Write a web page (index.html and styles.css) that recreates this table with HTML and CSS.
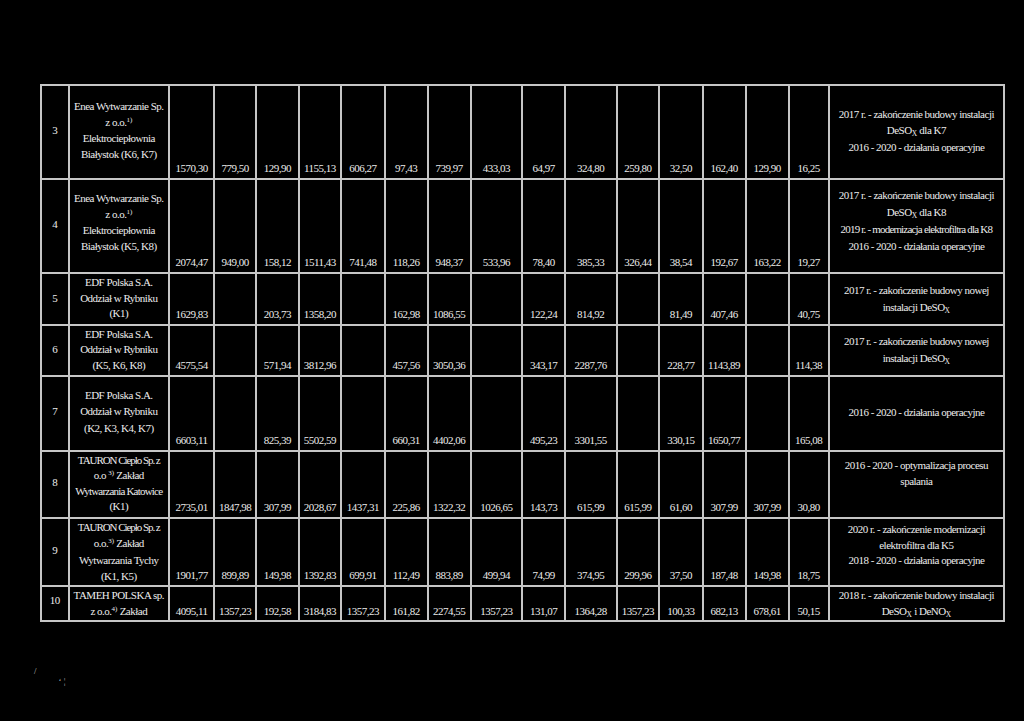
FILE: index.html
```html
<!DOCTYPE html>
<html lang="pl">
<head>
<meta charset="utf-8">
<title>Tabela</title>
<link rel="stylesheet" href="styles.css">
</head>
<body>
<div class="page">
<table class="grid">
<colgroup>
<col class="w0"><col class="w1"><col class="w2"><col class="w3"><col class="w4"><col class="w5"><col class="w6"><col class="w7"><col class="w8"><col class="w9"><col class="w10"><col class="w11"><col class="w12"><col class="w13"><col class="w14"><col class="w15"><col class="w16"><col class="w17">
</colgroup>
<tbody>
<tr class="r3">
<td class="idx">3</td>
<td class="name">Enea Wytwarzanie Sp.<br>z o.o.<span class="fn">1)</span><br>Elektrociepłownia<br>Białystok (K6, K7)</td>
<td>1570,30</td><td>779,50</td><td>129,90</td><td>1155,13</td><td>606,27</td><td>97,43</td><td>739,97</td><td>433,03</td><td>64,97</td><td>324,80</td><td>259,80</td><td>32,50</td><td>162,40</td><td>129,90</td><td>16,25</td>
<td class="note">2017 r. - zakończenie budowy instalacji<br>DeSO<span class="sub">X</span> dla K7<br>2016 - 2020 - działania operacyjne</td>
</tr>
<tr class="r4">
<td class="idx">4</td>
<td class="name">Enea Wytwarzanie Sp.<br>z o.o.<span class="fn">1)</span><br>Elektrociepłownia<br>Białystok (K5, K8)</td>
<td>2074,47</td><td>949,00</td><td>158,12</td><td>1511,43</td><td>741,48</td><td>118,26</td><td>948,37</td><td>533,96</td><td>78,40</td><td>385,33</td><td>326,44</td><td>38,54</td><td>192,67</td><td>163,22</td><td>19,27</td>
<td class="note">2017 r. - zakończenie budowy instalacji<br>DeSO<span class="sub">X</span> dla K8<br><span class="tight">2019 r. - modernizacja elektrofiltra dla K8</span><br>2016 - 2020 - działania operacyjne</td>
</tr>
<tr class="r5">
<td class="idx">5</td>
<td class="name">EDF Polska S.A.<br>Oddział w Rybniku<br>(K1)</td>
<td>1629,83</td><td></td><td>203,73</td><td>1358,20</td><td></td><td>162,98</td><td>1086,55</td><td></td><td>122,24</td><td>814,92</td><td></td><td>81,49</td><td>407,46</td><td></td><td>40,75</td>
<td class="note">2017 r. - zakończenie budowy nowej<br>instalacji DeSO<span class="sub">X</span></td>
</tr>
<tr class="r6">
<td class="idx">6</td>
<td class="name">EDF Polska S.A.<br>Oddział w Rybniku<br>(K5, K6, K8)</td>
<td>4575,54</td><td></td><td>571,94</td><td>3812,96</td><td></td><td>457,56</td><td>3050,36</td><td></td><td>343,17</td><td>2287,76</td><td></td><td>228,77</td><td>1143,89</td><td></td><td>114,38</td>
<td class="note">2017 r. - zakończenie budowy nowej<br>instalacji DeSO<span class="sub">X</span></td>
</tr>
<tr class="r7">
<td class="idx">7</td>
<td class="name">EDF Polska S.A.<br>Oddział w Rybniku<br>(K2, K3, K4, K7)</td>
<td>6603,11</td><td></td><td>825,39</td><td>5502,59</td><td></td><td>660,31</td><td>4402,06</td><td></td><td>495,23</td><td>3301,55</td><td></td><td>330,15</td><td>1650,77</td><td></td><td>165,08</td>
<td class="note">2016 - 2020 - działania operacyjne</td>
</tr>
<tr class="r8">
<td class="idx">8</td>
<td class="name"><span class="tighter">TAURON Ciepło Sp. z</span><br>o.o <span class="fn">3)</span> Zakład<br><span class="tight">Wytwarzania Katowice</span><br>(K1)</td>
<td>2735,01</td><td>1847,98</td><td>307,99</td><td>2028,67</td><td>1437,31</td><td>225,86</td><td>1322,32</td><td>1026,65</td><td>143,73</td><td>615,99</td><td>615,99</td><td>61,60</td><td>307,99</td><td>307,99</td><td>30,80</td>
<td class="note">2016 - 2020 - optymalizacja procesu<br>spalania</td>
</tr>
<tr class="r9">
<td class="idx">9</td>
<td class="name"><span class="tighter">TAURON Ciepło Sp. z</span><br>o.o.<span class="fn">3)</span> Zakład<br>Wytwarzania Tychy<br>(K1, K5)</td>
<td>1901,77</td><td>899,89</td><td>149,98</td><td>1392,83</td><td>699,91</td><td>112,49</td><td>883,89</td><td>499,94</td><td>74,99</td><td>374,95</td><td>299,96</td><td>37,50</td><td>187,48</td><td>149,98</td><td>18,75</td>
<td class="note">2020 r. - zakończenie modernizacji<br>elektrofiltra dla K5<br>2018 - 2020 - działania operacyjne</td>
</tr>
<tr class="r10">
<td class="idx">10</td>
<td class="name">TAMEH POLSKA sp.<br>z o.o.<span class="fn">4)</span> Zakład</td>
<td>4095,11</td><td>1357,23</td><td>192,58</td><td>3184,83</td><td>1357,23</td><td>161,82</td><td>2274,55</td><td>1357,23</td><td>131,07</td><td>1364,28</td><td>1357,23</td><td>100,33</td><td>682,13</td><td>678,61</td><td>50,15</td>
<td class="note">2018 r. - zakończenie budowy instalacji<br>DeSO<span class="sub">X</span> i DeNO<span class="sub">X</span></td>
</tr>
</tbody>
</table>
<div class="specks"><span class="s1">/</span><span class="s2">ʻ ¦</span></div>
</div>
</body>
</html>
```

FILE: styles.css
```css
html, body {
  margin: 0;
  padding: 0;
  background: #000;
}

.page {
  width: 1024px;
  height: 721px;
  overflow: hidden;
  padding: 84px 0 0 40px;
  box-sizing: border-box;
  font-family: "Liberation Serif", "Times New Roman", serif;
  color: #ececec;
}

.grid {
  border-collapse: collapse;
  table-layout: fixed;
  width: 963px;
  font-size: 11px;
  letter-spacing: -0.5px;
  line-height: 16px;
}

.w0 { width: 27.6px; }
.w1 { width: 100.4px; }
.w2 { width: 45.3px; }
.w3 { width: 41.7px; }
.w4 { width: 42.6px; }
.w5 { width: 42.7px; }
.w6 { width: 43.3px; }
.w7 { width: 43px; }
.w8 { width: 43px; }
.w9 { width: 51.7px; }
.w10 { width: 42.7px; }
.w11 { width: 51.6px; }
.w12 { width: 42.7px; }
.w13 { width: 43.3px; }
.w14 { width: 43px; }
.w15 { width: 43px; }
.w16 { width: 40.4px; }
.w17 { width: 175px; }

.grid td {
  box-sizing: border-box;
  border: 2px solid #c6c6c6;
  padding: 0 0 2px 0;
  text-align: center;
  vertical-align: bottom;
  white-space: nowrap;
  overflow: visible;
}

.grid td.idx,
.grid td.name,
.grid td.note {
  vertical-align: middle;
  padding-bottom: 5px;
}

.grid tr.r3 td { height: 94px; }
.grid tr.r4 td { height: 94px; }
.grid tr.r5 td { height: 52px; }
.grid tr.r6 td { height: 51px; }
.grid tr.r7 td { height: 75px; }
.grid tr.r8 td { height: 67px; }
.grid tr.r9 td { height: 68px; }
.grid tr.r10 td { height: 35px; }

.grid tr.r3 td.note { line-height: 16.5px; padding-bottom: 3px; }
.grid tr.r4 td.note { line-height: 16.8px; padding-bottom: 10px; }
.grid tr.r4 td.name { padding-bottom: 8px; }

.grid tr.r5 td.name, .grid tr.r6 td.name { line-height: 15.5px; padding-bottom: 1px; }
.grid tr.r5 td.note, .grid tr.r6 td.note { line-height: 17px; padding-bottom: 1px; }
.grid tr.r5 td.idx, .grid tr.r6 td.idx { padding-bottom: 3px; }

.grid tr.r7 td.name { line-height: 16.5px; padding-bottom: 4px; }
.grid tr.r7 td.note { padding-bottom: 4px; }

.grid tr.r8 td.name { line-height: 15.5px; padding-bottom: 2px; }
.grid tr.r8 td.note { line-height: 15.7px; padding-bottom: 21px; }
.grid tr.r8 td.idx { padding-bottom: 6px; }

.grid tr.r9 td.name { line-height: 16.3px; padding-bottom: 1px; }
.grid tr.r9 td.note { line-height: 15.5px; padding-bottom: 13px; }
.grid tr.r9 td.idx { padding-bottom: 5px; }

.grid tr.r10 td { padding-bottom: 1px; }
.grid tr.r10 td.name, .grid tr.r10 td.note { line-height: 15.8px; padding-bottom: 0; }
.grid tr.r10 td.idx { padding-bottom: 8px; }

.tight { letter-spacing: -0.8px; }
.tighter { letter-spacing: -1.05px; }

.fn {
  font-size: 7px;
  line-height: 0;
  vertical-align: 4px;
  letter-spacing: 0;
}

.sub {
  font-size: 7.5px;
  line-height: 0;
  vertical-align: -2px;
  letter-spacing: 0;
}

.specks {
  margin-top: 44px;
  height: 24px;
  display: flex;
  gap: 22px;
  color: #bdbdbd;
  font-size: 9px;
  line-height: 10px;
}

.specks .s1 { margin-left: -6px; }
.specks .s2 { margin-top: 10px; }
```
